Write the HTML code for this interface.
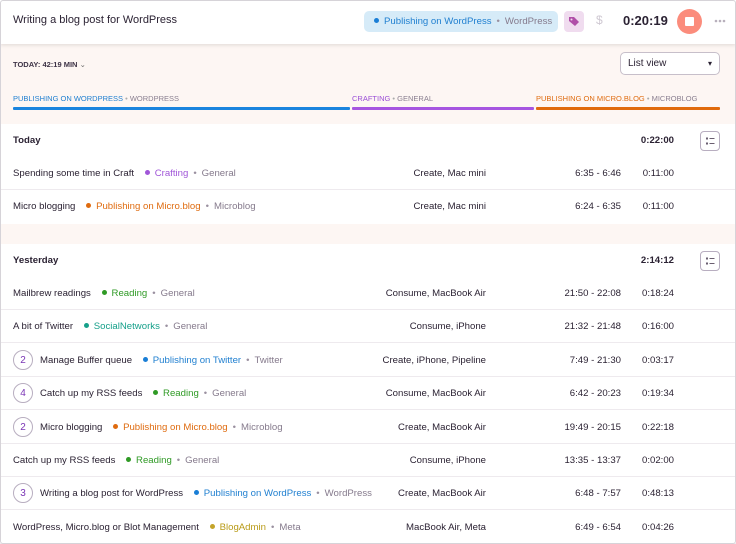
<!DOCTYPE html>
<html><head><meta charset="utf-8"><style>
*{box-sizing:border-box;margin:0;padding:0}
body{width:736px;height:544px;overflow:hidden;font-family:"Liberation Sans",sans-serif;background:#fff;position:relative;color:#2b2233}
.frame{position:absolute;left:0;top:0;width:736px;height:544px;border:1px solid #d6d3d8;border-radius:3px;pointer-events:none;z-index:10}
.hdr{position:absolute;left:0;top:0;width:736px;height:44px;background:#fff;box-shadow:0 1px 4px rgba(0,0,0,.12);z-index:2}
.pink{position:absolute;left:0;top:44px;width:736px;height:80px;background:#fdf6f3}
.gap{position:absolute;left:0;top:224px;width:736px;height:20px;background:#fdf6f3}
.abs{position:absolute;white-space:nowrap}
.row{position:absolute;left:0;width:736px;height:33px;border-bottom:1px solid #eeeaee;font-size:9.6px;color:#2b2233}
.row>*{position:absolute;top:0;line-height:33px;white-space:nowrap}
.d{left:13px}
.tg{color:#857a8c}
.dot{display:inline-block;width:5px;height:5px;border-radius:50%;margin-right:5px;vertical-align:1px}
.sep{color:#9a90a0;margin:0 5px}
.dev{right:250px;text-align:right}
.tm{right:115px}
.du{right:62px}
.row>.num{left:13px;top:6px;width:20px;height:20px;border:1px solid #b8aec0;border-radius:50%;text-align:center;line-height:19px;color:#7a35b5;font-size:10px}
.sh{position:absolute;left:0;width:736px;height:33px;font-weight:bold;font-size:9.6px}
.lb{position:absolute;left:700px;top:7px;width:20px;height:20px;border:1px solid #b8aec0;border-radius:4px}
</style></head><body>
<div class="hdr">
 <div class="abs" style="left:13px;top:14px;font-size:11px;color:#2b2233">Writing a blog post for WordPress</div>
 <div class="abs" style="left:364px;top:11px;width:194px;height:21px;background:#d6ebf8;border-radius:5px;font-size:9.6px;line-height:21px;padding-left:10px;color:#1f7fd0"><span class="dot" style="background:#1a7ed6"></span>Publishing on WordPress<span class="sep">•</span><span style="color:#857a8c">WordPress</span></div>
 <div class="abs" style="left:564px;top:11px;width:20px;height:21px;background:#f0dcef;border-radius:4px"><svg width="20" height="21" viewBox="0 0 20 21"><path d="M5 6h5l5 5-4 4-6-5z" fill="#b04ea8"/><circle cx="7.5" cy="8.5" r="1" fill="#f0dcef"/></svg></div>
 <div class="abs" style="left:596px;top:13px;font-size:12px;color:#cfc8d2">$</div>
 <div class="abs" style="left:623px;top:13px;font-size:13px;font-weight:bold;color:#2b2233">0:20:19</div>
 <div class="abs" style="left:677px;top:9px;width:25px;height:25px;border-radius:50%;background:#fb8c7c"><div style="position:absolute;left:8px;top:8px;width:9px;height:9px;background:#fff;border-radius:1px"></div></div>
 <svg class="abs" style="left:714px;top:19px" width="14" height="4"><g fill="#b8b0bc"><circle cx="2" cy="2" r="1.3"/><circle cx="6" cy="2" r="1.3"/><circle cx="10" cy="2" r="1.3"/></g></svg>
</div>
<div class="pink">
 <div class="abs" style="left:13px;top:16px;font-size:7.5px;font-weight:bold;color:#3e3346">TODAY: 42:19 MIN <span style="font-weight:normal;color:#666">⌄</span></div>
 <div class="abs" style="left:620px;top:8px;width:100px;height:23px;border:1px solid #c7bfca;border-radius:5px;background:#fff;font-size:10px;line-height:21px;padding-left:7px;color:#2b2233">List view<span style="position:absolute;right:7px;top:0;font-size:8px">▾</span></div>
 <div class="abs" style="left:13px;top:50px;font-size:7.5px;color:#1f7fd0">PUBLISHING ON WORDPRESS <span style="color:#aaa">•</span> <span style="color:#8a7f90">WORDPRESS</span></div>
 <div class="abs" style="left:352px;top:50px;font-size:7.5px;color:#9b4fd6">CRAFTING <span style="color:#aaa">•</span> <span style="color:#8a7f90">GENERAL</span></div>
 <div class="abs" style="left:536px;top:50px;font-size:7.5px;color:#df6b0f">PUBLISHING ON MICRO.BLOG <span style="color:#aaa">•</span> <span style="color:#8a7f90">MICROBLOG</span></div>
 <div class="abs" style="left:13px;top:63px;width:337px;height:3px;background:#1a84de;border-radius:1px"></div>
 <div class="abs" style="left:352px;top:63px;width:182px;height:3px;background:#a655e0;border-radius:1px"></div>
 <div class="abs" style="left:536px;top:63px;width:184px;height:3px;background:#e06a0c;border-radius:1px"></div>
</div>

<div class="sh" style="top:124px"><span class="abs" style="left:13px;line-height:33px">Today</span><span class="abs" style="right:62px;line-height:33px">0:22:00</span><div class="lb"></div></div>
<div class="row" style="top:157px"><span class="d">Spending some time in Craft <span style="margin-left:8px;color:#a056d8"><span class="dot" style="background:#a056d8"></span>Crafting</span><span class="sep">•</span><span class="tg">General</span></span><span class="dev">Create, Mac mini</span><span class="tm">6:35 - 6:46</span><span class="du">0:11:00</span></div>
<div class="row" style="top:190px;border-bottom:none"><span class="d">Micro blogging <span style="margin-left:8px;color:#df6b0f"><span class="dot" style="background:#df6b0f"></span>Publishing on Micro.blog</span><span class="sep">•</span><span class="tg">Microblog</span></span><span class="dev">Create, Mac mini</span><span class="tm">6:24 - 6:35</span><span class="du">0:11:00</span></div>
<div class="gap"></div>
<div class="sh" style="top:244px"><span class="abs" style="left:13px;line-height:33px">Yesterday</span><span class="abs" style="right:62px;line-height:33px">2:14:12</span><div class="lb"></div></div>

<div class="row" style="top:277px"><span class="d">Mailbrew readings <span style="margin-left:8px;color:#2f9a25"><span class="dot" style="background:#2f9a25"></span>Reading</span><span class="sep">•</span><span class="tg">General</span></span><span class="dev">Consume, MacBook Air</span><span class="tm">21:50 - 22:08</span><span class="du">0:18:24</span></div>
<div class="row" style="top:310px"><span class="d">A bit of Twitter <span style="margin-left:8px;color:#16a08a"><span class="dot" style="background:#16a08a"></span>SocialNetworks</span><span class="sep">•</span><span class="tg">General</span></span><span class="dev">Consume, iPhone</span><span class="tm">21:32 - 21:48</span><span class="du">0:16:00</span></div>
<div class="row" style="top:344px"><span class="num">2</span><span class="d" style="left:40px">Manage Buffer queue <span style="margin-left:8px;color:#1f7fd0"><span class="dot" style="background:#1a7ed6"></span>Publishing on Twitter</span><span class="sep">•</span><span class="tg">Twitter</span></span><span class="dev">Create, iPhone, Pipeline</span><span class="tm">7:49 - 21:30</span><span class="du">0:03:17</span></div>
<div class="row" style="top:377px"><span class="num">4</span><span class="d" style="left:40px">Catch up my RSS feeds <span style="margin-left:8px;color:#2f9a25"><span class="dot" style="background:#2f9a25"></span>Reading</span><span class="sep">•</span><span class="tg">General</span></span><span class="dev">Consume, MacBook Air</span><span class="tm">6:42 - 20:23</span><span class="du">0:19:34</span></div>
<div class="row" style="top:411px"><span class="num">2</span><span class="d" style="left:40px">Micro blogging <span style="margin-left:8px;color:#df6b0f"><span class="dot" style="background:#df6b0f"></span>Publishing on Micro.blog</span><span class="sep">•</span><span class="tg">Microblog</span></span><span class="dev">Create, MacBook Air</span><span class="tm">19:49 - 20:15</span><span class="du">0:22:18</span></div>
<div class="row" style="top:444px"><span class="d">Catch up my RSS feeds <span style="margin-left:8px;color:#2f9a25"><span class="dot" style="background:#2f9a25"></span>Reading</span><span class="sep">•</span><span class="tg">General</span></span><span class="dev">Consume, iPhone</span><span class="tm">13:35 - 13:37</span><span class="du">0:02:00</span></div>
<div class="row" style="top:477px"><span class="num">3</span><span class="d" style="left:40px">Writing a blog post for WordPress <span style="margin-left:8px;color:#1f7fd0"><span class="dot" style="background:#1a7ed6"></span>Publishing on WordPress</span><span class="sep">•</span><span class="tg">WordPress</span></span><span class="dev">Create, MacBook Air</span><span class="tm">6:48 - 7:57</span><span class="du">0:48:13</span></div>
<div class="row" style="top:511px"><span class="d">WordPress, Micro.blog or Blot Management <span style="margin-left:8px;color:#b89a16"><span class="dot" style="background:#c4a42a"></span>BlogAdmin</span><span class="sep">•</span><span class="tg">Meta</span></span><span class="dev">MacBook Air, Meta</span><span class="tm">6:49 - 6:54</span><span class="du">0:04:26</span></div>

<svg class="abs" style="left:700px;top:131px" width="20" height="20"><g fill="#6a5f70"><rect x="6" y="6.5" width="2" height="2"/><rect x="9.5" y="7" width="5" height="1"/><rect x="6" y="11.5" width="2" height="2"/><rect x="9.5" y="12" width="5" height="1"/></g></svg>
<svg class="abs" style="left:700px;top:251px" width="20" height="20"><g fill="#6a5f70"><rect x="6" y="6.5" width="2" height="2"/><rect x="9.5" y="7" width="5" height="1"/><rect x="6" y="11.5" width="2" height="2"/><rect x="9.5" y="12" width="5" height="1"/></g></svg>
<div class="frame"></div>
</body></html>
